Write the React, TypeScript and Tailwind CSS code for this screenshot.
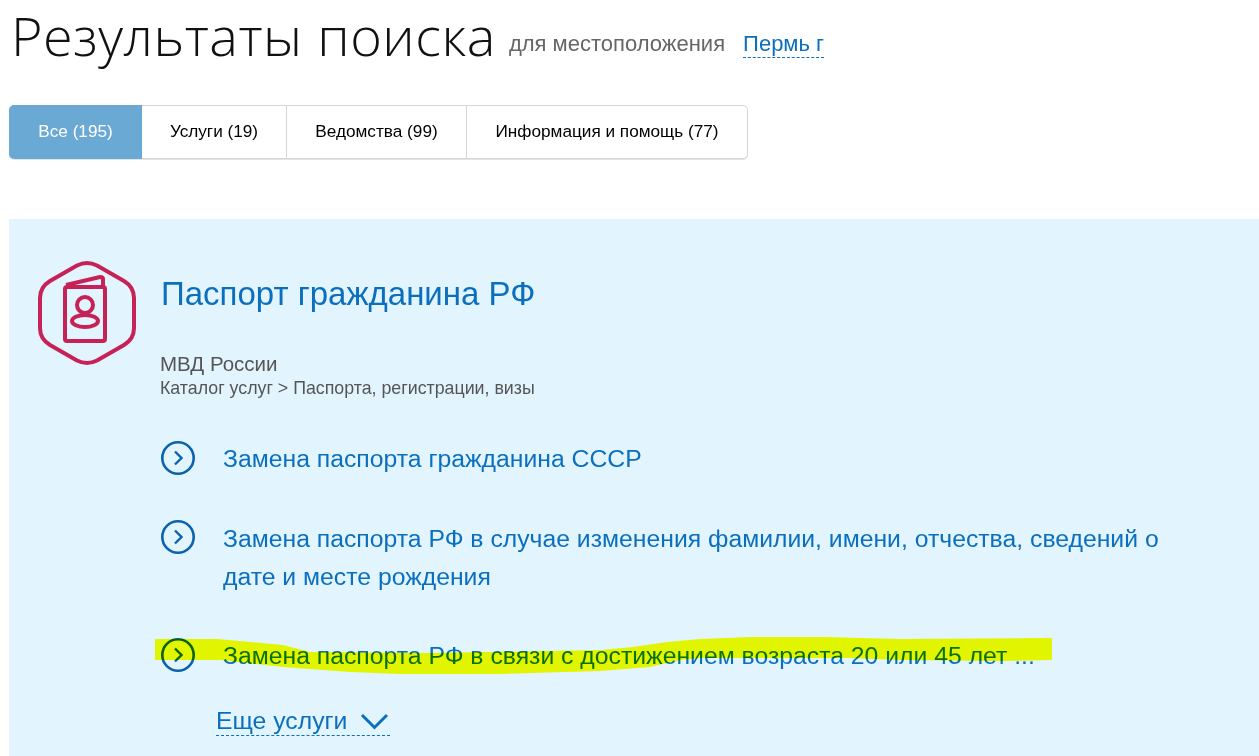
import React from 'react'

const tabs = ['Услуги (19)', 'Ведомства (99)', 'Информация и помощь (77)']
const tabWidths = ['w-[145px]', 'w-[180px]', 'w-[281px] rounded-r-[5px] border-r']

const ArrowCircle = () => (
  <svg width="36" height="36" viewBox="0 0 36 36" fill="none" className="shrink-0">
    <circle cx="18" cy="18" r="15.7" stroke="#0b63ad" strokeWidth="2.6" />
    <path d="M15 11.5l6.5 6.5-6.5 6.5" stroke="#0b63ad" strokeWidth="2.4" />
  </svg>
)

const PassportIcon = () => (
  <svg width="98" height="106" viewBox="0 0 98 106" fill="none" stroke="#c72255" strokeWidth="4" strokeLinejoin="round">
    <path d="M39 5.5q10-5 20 0l27 15.500q10 6 10 17v30q0 11-10 17l-27 15.500q-10 5-20 0l-27-15.500q-10-6-10-17v-30q0-11 10-17z" />
    <rect x="27" y="27" width="40" height="54" rx="2" />
    <path d="M28 25l34-8q3 0 3 2v7" />
    <circle cx="47" cy="45" r="8" />
    <ellipse cx="47" cy="61" rx="13" ry="6" />
  </svg>
)

export default function App() {
  return (
    <div className="h-[756px] w-[1259px] overflow-hidden bg-white pl-[9px] font-['Liberation_Sans',Arial,sans-serif]">
      <div className="flex h-[105px] items-start">
        <h1 className="ml-[2px] font-['Open_Sans',sans-serif] text-[54px] leading-[70px] font-light tracking-[0.52px] whitespace-nowrap text-[#111]">
          Результаты поиска
        </h1>
        <span className="mt-[28px] ml-[13px] text-[22px] leading-[32px] text-[#666]">для местоположения</span>
        <span className="mt-[28px] ml-[18px] h-[30px] border-b border-dashed border-[#0b6fbd] text-[22px] leading-[32px] text-[#0b6fbd]">
          Пермь г
        </span>
      </div>

      <div className="flex h-[54px] w-[739px] rounded-[5px] text-[17.2px] shadow-[0_1px_0_#e4e4e4]">
        <div className="flex w-[133px] items-center justify-center rounded-l-[5px] bg-[#6ba9d5] text-white">
          Все (195)
        </div>
        {tabs.map((tab, i) => (
          <div
            key={tab}
            className={`flex items-center justify-center border-y border-r border-[#d5d5d5] text-black ${tabWidths[i]}`}
          >
            {tab}
          </div>
        ))}
      </div>

      <div className="relative mt-[60px] h-[537px] bg-[#e2f5ff] pt-[41px] pl-[29px]">
        <div className="flex items-start">
          <PassportIcon />
          <div className="ml-[24px] flex flex-col">
            <h2 className="mt-[9px] ml-[1px] text-[33px] leading-[50px] text-[#0b6fbd]">Паспорт гражданина РФ</h2>
            <div className="mt-[33px] text-[20.5px] leading-[24px] text-[#555]">МВД России</div>
            <div className="text-[17.8px] leading-[24px] text-[#555]">Каталог услуг &gt; Паспорта, регистрации, визы</div>
          </div>
        </div>

        <div className="mt-[40px] ml-[122px] flex flex-col gap-[41px] text-[24.75px] leading-[38px] text-[#0b6fbd]">
          <div className="flex gap-[27px]">
            <ArrowCircle />
            <span>Замена паспорта гражданина СССР</span>
          </div>
          <div className="flex gap-[27px]">
            <ArrowCircle />
            <span className="mt-[1px] w-[950px]">
              Замена паспорта РФ в случае изменения фамилии, имени, отчества, сведений о дате и месте рождения
            </span>
          </div>
          <div className="flex gap-[27px]">
            <ArrowCircle />
            <span>Замена паспорта РФ в связи с достижением возраста 20 или 45 лет ...</span>
          </div>
        </div>

        <div className="mt-[25px] ml-[178px] flex h-[36px] w-[174px] items-end gap-[12px] border-b border-dashed border-[#0b6fbd] text-[24.75px] leading-[28px] text-[#0b6fbd]">
          <span>Еще услуги</span>
          <svg width="30" height="20" viewBox="0 0 30 20" fill="none" className="mb-[3px]">
            <path d="M3 3l12.500 12.500L28 3" stroke="#0b6fbd" strokeWidth="3" />
          </svg>
        </div>

        {/* marker stroke over the third row */}
        <svg width="910" height="50" viewBox="0 0 910 50" className="absolute top-[412px] left-[146px] mix-blend-multiply">
          <path
            d="M0 8L62 8 128 14 155 21 278 22 445 19 478 16 512 11 545 8 595 6 670 6 745 8 885 7 897 7V29L845 30 745 29 695 27 545 27 525 29 495 36 445 40 345 43 245 43 195 41 128 36 65 29H0z"
            fill="#ffff00"
          />
        </svg>
      </div>
    </div>
  )
}
